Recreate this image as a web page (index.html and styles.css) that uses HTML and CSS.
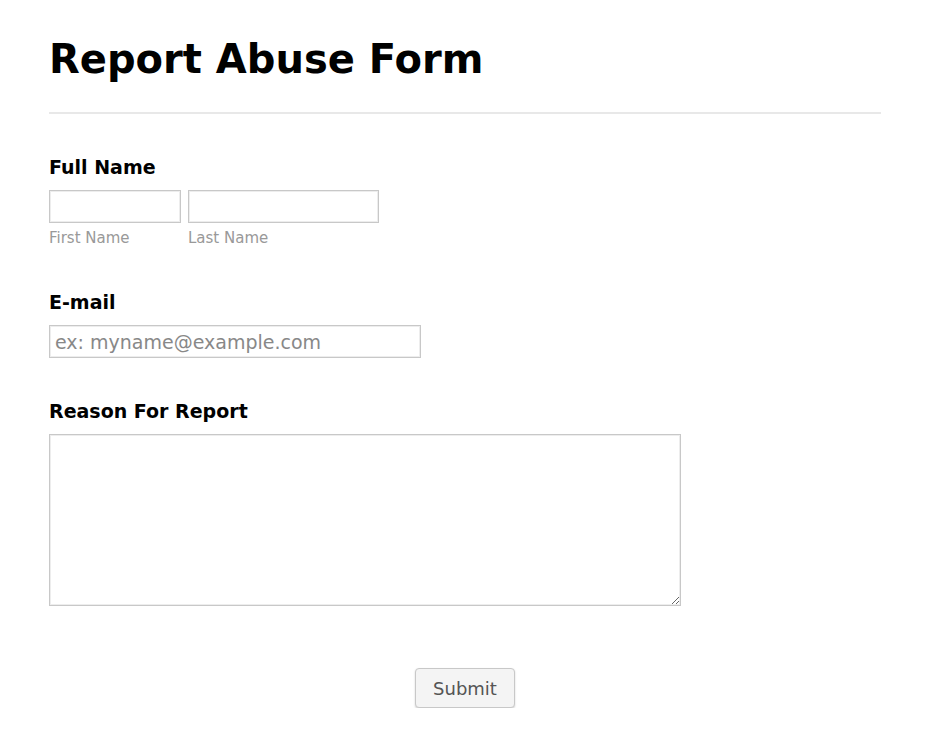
FILE: index.html
```html
<!DOCTYPE html>
<html lang="en">
<head>
    <meta charset="UTF-8">
    <meta name="viewport" content="width=device-width, initial-scale=1.0">
    <title>Report Abuse Form</title>
    <link rel="stylesheet" href="styles.css">
</head>
<body>
    <form class="form">
        <h1 class="form-title">Report Abuse Form</h1>

        <div class="field">
            <label class="field-label">Full Name</label>
            <div class="name-row">
                <div class="name-part">
                    <input type="text" class="input input-first">
                    <span class="sublabel">First Name</span>
                </div>
                <div class="name-part">
                    <input type="text" class="input input-last">
                    <span class="sublabel">Last Name</span>
                </div>
            </div>
        </div>

        <div class="field field-email">
            <label class="field-label">E-mail</label>
            <input type="email" class="input input-email" placeholder="ex: myname@example.com">
        </div>

        <div class="field">
            <label class="field-label">Reason For Report</label>
            <textarea class="input input-reason"></textarea>
        </div>

        <div class="actions">
            <button type="button" class="submit">Submit</button>
        </div>
    </form>
</body>
</html>
```

FILE: styles.css
```css
body {
    margin: 0;
    font-family: "DejaVu Sans", Verdana, sans-serif;
    background: #fff;
    color: #000;
}

.form {
    width: 832px;
    padding: 36px 0 0 49px;
}

.form-title {
    margin: 0;
    font-size: 40px;
    font-weight: bold;
    padding-bottom: 30px;
    border-bottom: 2px solid #e8e8e8;
}

.field {
    margin-top: 42px;
}

.field-email {
    margin-top: 44px;
}

.field-label {
    display: block;
    font-size: 19px;
    font-weight: bold;
    margin-bottom: 12px;
}

.name-row {
    display: flex;
    gap: 7px;
}

.name-part {
    display: flex;
    flex-direction: column;
}

.sublabel {
    font-size: 15px;
    color: #999;
    margin-top: 6px;
}

.input {
    box-sizing: border-box;
    margin: 0;
    border: 1px solid #c8c8c8;
    box-shadow: inset 0 0 0 1px #ededed;
    font-family: inherit;
    font-size: 19px;
    padding: 4px 5px;
    background: #fff;
}

.input-first {
    width: 132px;
    height: 33px;
}

.input-last {
    width: 191px;
    height: 33px;
}

.input-email {
    width: 372px;
    height: 33px;
}

.input-email::placeholder {
    color: #888;
}

.input-reason {
    display: block;
    width: 632px;
    height: 172px;
    resize: both;
}

.actions {
    margin-top: 62px;
    text-align: center;
}

.submit {
    width: 100px;
    height: 40px;
    font-family: inherit;
    font-size: 18px;
    color: #555;
    background: #f4f4f4;
    border: 1px solid #c8c8c8;
    border-radius: 4px;
    box-shadow: 0 1px 2px rgba(0, 0, 0, 0.18);
    cursor: pointer;
}
```
